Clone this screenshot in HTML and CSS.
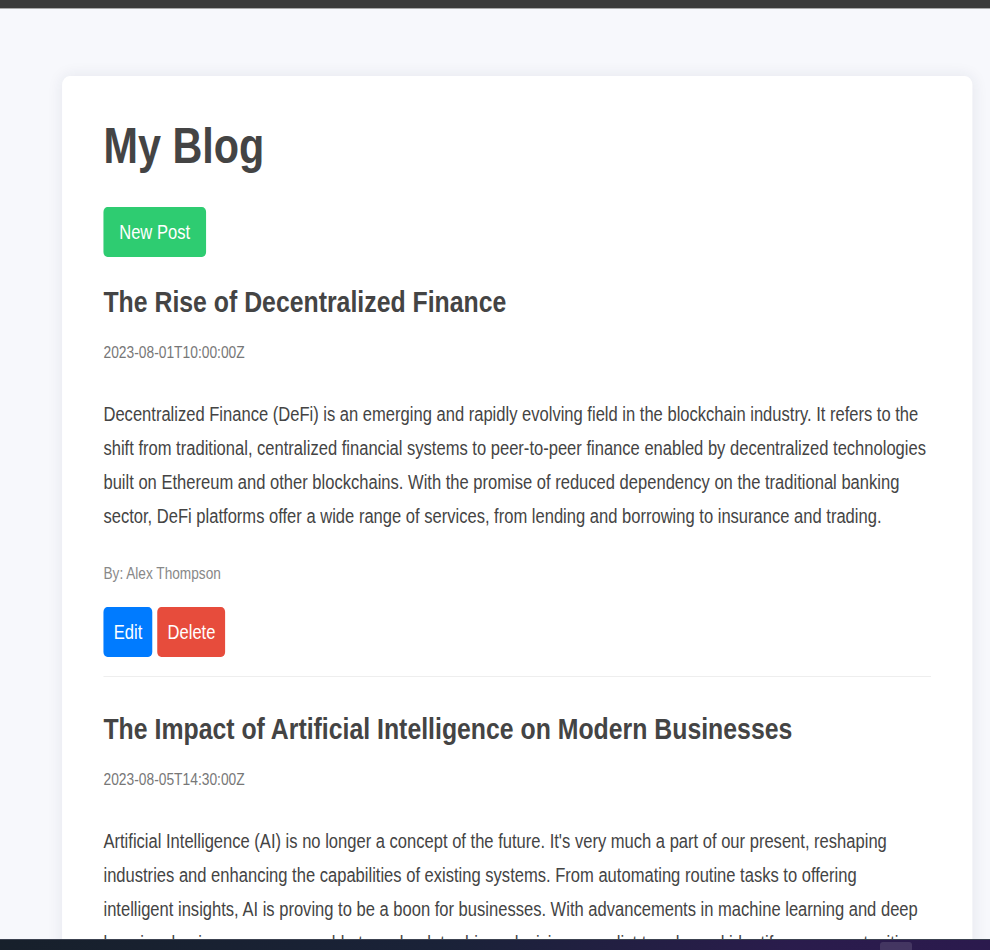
FILE: index.html
```html
<!DOCTYPE html>
<html lang="en">
<head>
<meta charset="utf-8">
<title>My Blog</title>
<link rel="stylesheet" href="styles.css">
</head>
<body>
<div class="topbar"></div>
<div class="viewport">
  <div class="stage">
    <main class="card">
      <h1 class="title">My Blog</h1>
      <div class="toolbar">
        <button class="btn btn-new">New Post</button>
      </div>
      <article class="post">
        <h2 class="post-title">The Rise of Decentralized Finance</h2>
        <div class="post-date">2023-08-01T10:00:00Z</div>
        <p class="post-body">Decentralized Finance (DeFi) is an emerging and rapidly evolving field in the blockchain industry. It refers to the shift from traditional, centralized financial systems to peer-to-peer finance enabled by decentralized technologies built on Ethereum and other blockchains. With the promise of reduced dependency on the traditional banking sector, DeFi platforms offer a wide range of services, from lending and borrowing to insurance and trading.</p>
        <div class="post-author">By: Alex Thompson</div>
        <div class="post-actions">
          <button class="btn btn-edit">Edit</button>
          <button class="btn btn-delete">Delete</button>
        </div>
      </article>
      <article class="post">
        <h2 class="post-title">The Impact of Artificial Intelligence on Modern Businesses</h2>
        <div class="post-date">2023-08-05T14:30:00Z</div>
        <p class="post-body">Artificial Intelligence (AI) is no longer a concept of the future. It's very much a part of our present, reshaping industries and enhancing the capabilities of existing systems. From automating routine tasks to offering intelligent insights, AI is proving to be a boon for businesses. With advancements in machine learning and deep learning, businesses are now able to make data-driven decisions, predict trends, and identify new opportunities.</p>
        <div class="post-author">By: Sarah Mitchell</div>
        <div class="post-actions">
          <button class="btn btn-edit">Edit</button>
          <button class="btn btn-delete">Delete</button>
        </div>
      </article>
    </main>
  </div>
</div>
<div class="taskbar"><span class="taskbar-item"></span></div>
</body>
</html>
```

FILE: styles.css
```css
html, body {
  margin: 0;
  padding: 0;
  overflow: hidden;
  height: 100%;
}

body {
  background: #f7f8fc;
  font-family: "Liberation Sans", Arial, sans-serif;
  color: #444;
}

.topbar {
  height: 8px;
  background: #3b3b3b;
  border-bottom: 1px solid #a9a9a9;
}

.viewport {
  width: 990px;
  overflow: hidden;
}

.stage {
  width: 1196px;
  transform: scaleX(0.8276);
  transform-origin: 0 0;
}

.card {
  box-sizing: border-box;
  width: 1100px;
  margin: 67px 0 0 75px;
  padding: 43px 50px 40px;
  background: #fff;
  border-radius: 9px;
  box-shadow: 0 0 18px rgba(30, 40, 80, 0.09);
}

.title {
  margin: 0 0 34px;
  font-size: 50px;
  line-height: 54px;
  font-weight: 700;
  color: #444;
}

.toolbar {
  margin-bottom: 27px;
}

.btn {
  display: inline-block;
  height: 50px;
  border: none;
  border-radius: 5px;
  font-family: "Liberation Sans", Arial, sans-serif;
  font-size: 20px;
  line-height: 50px;
  color: #fff;
  padding: 0 12px;
  vertical-align: top;
}

.btn-new {
  background: #2ecc71;
  padding: 0 19px;
}

.btn-edit {
  background: #007bff;
  padding: 0 12.5px;
}

.btn-delete {
  background: #e74c3c;
  margin-left: 6px;
}

.post {
  padding-bottom: 19px;
  border-bottom: 1px solid #eee;
  margin-bottom: 34px;
}

.post-title {
  margin: 0;
  font-size: 30px;
  line-height: 36px;
  font-weight: 700;
  color: #444;
}

.post-date {
  margin-top: 21px;
  font-size: 16.7px;
  line-height: 24px;
  color: #777;
}

.post-body {
  margin: 32px 0 0;
  font-size: 20px;
  line-height: 34px;
  color: #444;
}

.post-author {
  margin-top: 29.5px;
  font-size: 16.5px;
  line-height: 20px;
  color: #888;
}

.post-actions {
  margin-top: 24.5px;
  display: flex;
}

.taskbar {
  position: fixed;
  left: 0;
  right: 0;
  bottom: 0;
  height: 10px;
  background: linear-gradient(90deg, #17202b 0%, #1a2238 45%, #2a1c4c 80%, #2b1a4d 100%);
  border-top: 1px solid #3c4250;
}

.taskbar-item {
  position: absolute;
  right: 78px;
  top: 2px;
  width: 32px;
  height: 10px;
  border-radius: 3px;
  background: rgba(255, 255, 255, 0.12);
}
```
